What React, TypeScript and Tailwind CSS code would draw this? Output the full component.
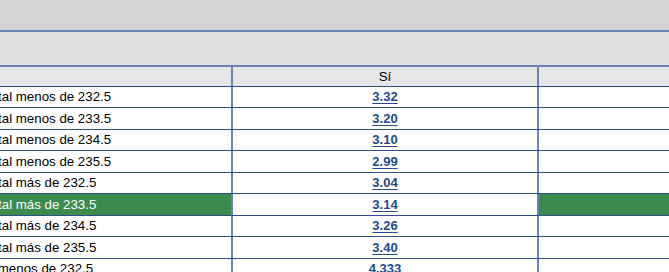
const rows = [
  { label: "Total menos de 232.5", odds: "3.32", shift: "-ml-[16px]" },
  { label: "Total menos de 233.5", odds: "3.20", shift: "-ml-[16px]" },
  { label: "Total menos de 234.5", odds: "3.10", shift: "-ml-[16px]" },
  { label: "Total menos de 235.5", odds: "2.99", shift: "-ml-[16px]" },
  { label: "Total más de 232.5", odds: "3.04", shift: "-ml-[16px]" },
  { label: "Total más de 233.5", odds: "3.14", shift: "-ml-[16px]", picked: true },
  { label: "Total más de 234.5", odds: "3.26", shift: "-ml-[16px]" },
  { label: "Total más de 235.5", odds: "3.40", shift: "-ml-[16px]" },
  { label: "Total menos de 232.5", odds: "4.333", shift: "-ml-[34px]" },
];

function Row({ r, i }: { r: (typeof rows)[number]; i: number }) {
  const h = i % 2 === 0 ? "h-[21px]" : "h-[22px]";
  const green = r.picked ? "bg-[#3d8a4f] text-white" : "bg-white text-black";
  return (
    <div className={`flex ${h} border-b border-[#2f4f88]`}>
      <div className={`w-[231px] shrink-0 overflow-hidden whitespace-nowrap flex items-center text-[13.3px] ${green}`}>
        <span className={r.shift}>{r.label}</span>
      </div>
      <div className="w-[2px] shrink-0 bg-[#6a83b0]" />
      <div className="w-[304px] shrink-0 flex items-center justify-center bg-white">
        <a className="font-bold text-[#1f4a8c] underline underline-offset-2">{r.odds}</a>
      </div>
      <div className="w-[2px] shrink-0 bg-[#6a83b0]" />
      <div className={`flex-1 ${r.picked ? "bg-[#3d8a4f]" : "bg-white"}`} />
    </div>
  );
}

export default function App() {
  return (
    <div className="w-[669px] h-[272px] overflow-hidden bg-white text-[13px] font-['Liberation_Sans',Arial,sans-serif]">
      <div className="h-[30px] bg-[#d4d4d4]" />
      <div className="h-[2px] bg-[#6a83b0]" />
      <div className="h-[33px] bg-[#e0e0e0]" />
      <div className="h-[2px] bg-[#6a83b0]" />
      <div className="flex h-[20px] border-b border-[#2f4f88] bg-[#e6e6e6]">
        <div className="w-[231px] shrink-0" />
        <div className="w-[2px] shrink-0 bg-[#6a83b0]" />
        <div className="w-[304px] shrink-0 flex items-center justify-center text-black text-[13.3px]">Sí</div>
        <div className="w-[2px] shrink-0 bg-[#6a83b0]" />
        <div className="flex-1" />
      </div>
      {rows.map((r, i) => (
        <Row key={i} r={r} i={i} />
      ))}
    </div>
  );
}
